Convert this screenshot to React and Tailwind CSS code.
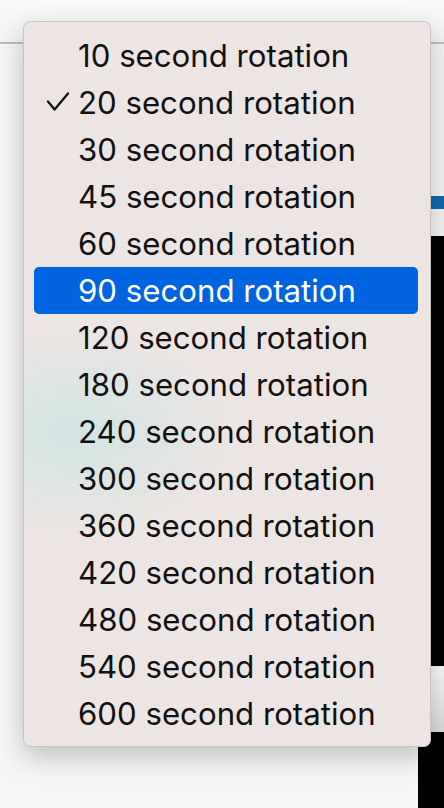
import React from 'react';

const options = [10, 20, 30, 45, 60, 90, 120, 180, 240, 300, 360, 420, 480, 540, 600];

const Check = () => (
  <svg width="24" height="20" viewBox="0 0 24 20" className="absolute left-[12px] top-[13px]">
    <path d="M2 9.5 L8.6 17.5 L22 1.5" fill="none" stroke="#111" strokeWidth="2.3" strokeLinecap="round" strokeLinejoin="round" />
  </svg>
);

const App = () => {
  const selected = 20;
  const hovered = 90;

  return (
    <div className="relative w-[444px] h-[808px] overflow-hidden bg-[#f6f6f6] font-['Inter',sans-serif]">
      {/* page behind the menu */}
      <div className="flex flex-col h-full">
        <div className="h-[42px] bg-gradient-to-b from-[#fafafa] to-[#f3f3f3]" />
        <div className="h-[2px] bg-[#bcbcbc]" />
        <div className="flex-1 flex justify-end">
          <div className="w-[26px] flex flex-col">
            <div className="h-[152px] bg-[#f4f4f4]" />
            <div className="h-[13px] bg-[#0b69b3]" />
            <div className="h-[27px] bg-[#f4f4f4]" />
            <div className="h-[430px] bg-black" />
            <div className="h-[66px] bg-gradient-to-b from-[#fafafa] via-[#ececec] to-[#d9d9d9]" />
            <div className="flex-1 bg-black" />
          </div>
        </div>
      </div>

      {/* dropdown menu */}
      <div className="absolute left-[23px] top-[21px] w-[408px] rounded-[7px] border border-[#c9c4c3] bg-[#ede5e3] pt-[10px] pb-[9px] shadow-[0_10px_28px_rgba(0,0,0,0.22)] overflow-hidden">
        <div className="pointer-events-none absolute left-[-120px] top-[300px] w-[340px] h-[220px] bg-[radial-gradient(closest-side,rgba(206,228,226,0.9),rgba(237,229,227,0))]" />
        <ul className="relative">
          {options.map((n) => {
            const isHover = n === hovered;
            return (
              <li
                key={n}
                className={
                  isHover
                    ? 'relative mx-[10px] mr-[12px] h-[47px] rounded-[5px] bg-[#0064e1] text-white flex items-center'
                    : 'relative mx-[10px] mr-[12px] h-[47px] text-[#111] flex items-center'
                }
              >
                {n === selected && <Check />}
                <span className="pl-[44px] pt-[2px] text-[31.2px] leading-none">{n} second rotation</span>
              </li>
            );
          })}
        </ul>
      </div>
    </div>
  );
};

export default App;
